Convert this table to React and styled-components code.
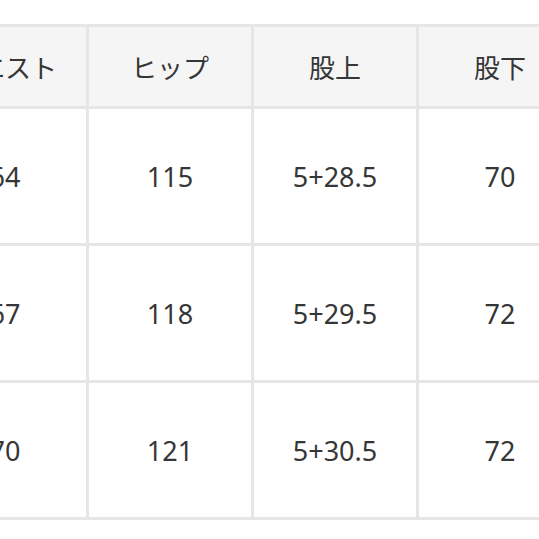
import React from "react";
import styled, { createGlobalStyle } from "styled-components";

const GlobalStyle = createGlobalStyle`
  html, body {
    margin: 0;
    padding: 0;
    background: #ffffff;
    overflow: hidden;
  }
  body {
    font-family: "Noto Sans", "Noto Sans CJK JP", sans-serif;
  }
`;

// Page wrapper, the table is wider than the window and starts off-screen
const Page = styled.div`
  width: 539px;
  height: 539px;
  overflow: hidden;
  background: #ffffff;
`;

// Grid whose gaps form the cell lines
const SizeTable = styled.div`
  display: grid;
  grid-template-columns: repeat(5, 162px);
  grid-template-rows: 79px repeat(3, 134px);
  gap: 3px;
  padding: 3px;
  width: max-content;
  margin: 24px 0 0 -79px;
  background: #e6e6e6;
`;

const Cell = styled.div`
  display: flex;
  align-items: center;
  justify-content: center;
  background: ${(props) => (props.head ? "#f5f5f5" : "#ffffff")};
  color: #363636;
  font-family: ${(props) =>
    props.head
      ? '"Noto Sans CJK JP", "Noto Sans", sans-serif'
      : '"Noto Sans", "Noto Sans CJK JP", sans-serif'};
  font-size: ${(props) => (props.head ? "26px" : "27px")};
  line-height: 1;
  white-space: nowrap;
`;

const headers = ["ウエスト", "ヒップ", "股上", "股下", "裾幅"];

const rows = [
  ["64", "115", "5+28.5", "70", "24"],
  ["67", "118", "5+29.5", "72", "25"],
  ["70", "121", "5+30.5", "72", "26"],
];

const App = () => {
  return (
    <>
      <GlobalStyle />
      <Page>
        <SizeTable>
          {headers.map((h) => (
            <Cell key={h} head>
              {h}
            </Cell>
          ))}
          {rows.map((row, i) =>
            row.map((value, j) => <Cell key={`${i}-${j}`}>{value}</Cell>)
          )}
        </SizeTable>
      </Page>
    </>
  );
};

export default App;
